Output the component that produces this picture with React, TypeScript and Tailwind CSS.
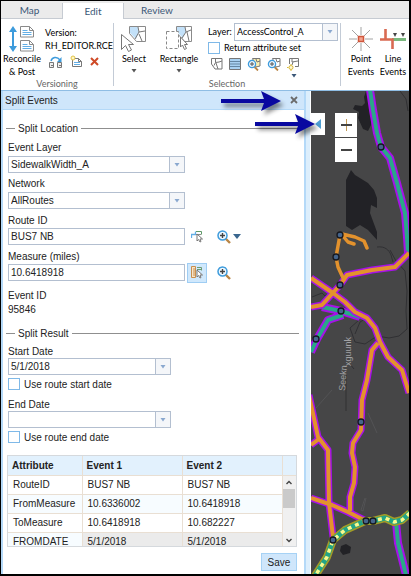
import type { ReactNode } from "react";

const ribbonFont = "font-[Lato,'Open_Sans',sans-serif]";
const panelFont = "font-['Liberation_Sans',Arial,sans-serif]";

function Caret({ className = "" }: { className?: string }) {
  return (
    <svg className={className} width="6" height="4" viewBox="0 0 6 4" aria-hidden="true">
      <path d="M.5 0h5L3 3.500z" fill="currentColor" />
    </svg>
  );
}

function Combo({ id, value, className = "" }: { id: string; value: string; className?: string }) {
  return (
    <div className={`relative flex ${className}`}>
      <select
        id={id}
        defaultValue={value}
        className="w-full appearance-none border border-[#b3bfd0] bg-white pl-[2px] pr-4 text-inherit outline-none"
      >
        <option>{value}</option>
      </select>
      <span className="pointer-events-none absolute inset-y-0 right-0 flex w-4 items-center justify-center border border-[#b3bfd0] bg-[#f4f6f9] text-[#8aa8cf]">
        <Caret />
      </span>
    </div>
  );
}

function CheckBox({ id }: { id: string }) {
  return (
    <input
      id={id}
      type="checkbox"
      className="size-3 shrink-0 appearance-none border border-[#7fb9e8] bg-white checked:bg-[#7fb9e8]"
    />
  );
}

/* ---------- ribbon icons ---------- */

function Page({ x, y }: { x: number; y: number }) {
  return (
    <g transform={`translate(${x} ${y})`}>
      <path d="M.5.5h9l4 4v6.500h-13z" fill="#fff" stroke="#8a8a8a" />
      <path d="M9.500.5v4h4" fill="none" stroke="#8a8a8a" />
      <path d="M2.500 4.500h5M2.500 6.500h9M2.500 8.500h9" stroke="#62aee6" />
    </g>
  );
}

function ReconcileIcon() {
  return (
    <svg width="26" height="26" viewBox="0 0 26 26" aria-hidden="true">
      <path d="M4 5v16" stroke="#3d9bdc" strokeWidth="2" />
      <path d="M4 0l4 6H0zM4 26l4-6H0z" fill="#3d9bdc" />
      <Page x={11} y={0} />
      <Page x={11} y={14} />
    </svg>
  );
}

function SelectIcon({ dashed = false }: { dashed?: boolean }) {
  return (
    <svg width="26" height="26" viewBox="0 0 26 26" aria-hidden="true">
      {dashed ? (
        <>
          <path d="M10.500.5h15v15h-7l-8-9z" fill="#fff" stroke="#8a8a8a" />
          <path d="M11 1h8l1 4-3 7-6-6z" fill="#c3e1f9" />
          <path d="M19 1l1 5 5-2M20 6l-4 6M21 6l2 9" fill="none" stroke="#777" />
          <path d="M.5 5.500h12v17H.5z" fill="#fff" stroke="#888" strokeDasharray="3 2" />
          <path d="M14.500 11v10l2-2 2 4.500 2-1-2-4h3z" fill="#fff" stroke="#777" />
        </>
      ) : (
        <>
          <path d="M8.500.5h16v15h-9l-7-8z" fill="#fff" stroke="#8a8a8a" />
          <path d="M9 1h8l1 5-3 7-6-6z" fill="#c3e1f9" />
          <path d="M17 1l1 5 6-1M18 6l-4 7M18 8l3 7" fill="none" stroke="#777" />
          <path d="M.5 8.500v15l4-4 3 6 3-1.500-3-5.500h5z" fill="#fff" stroke="#777" />
        </>
      )}
    </svg>
  );
}

function ReplicaIcon() {
  return (
    <svg width="14" height="12" viewBox="0 0 14 12" aria-hidden="true">
      <path d="M2 5c1-4 6-5 9-1" fill="none" stroke="#3d9bdc" strokeWidth="1.500" />
      <path d="M12.500 1v5H8z" fill="#3d9bdc" />
      <path d="M.5 6.500h4v5h-4zM8.500 6.500h4v5h-4z" fill="#eee" stroke="#777" />
      <path d="M2 9.500h2M10 9.500h2" stroke="#777" />
    </svg>
  );
}

function NewVersionIcon() {
  return (
    <svg width="13" height="13" viewBox="0 0 13 13" aria-hidden="true">
      <path d="M2.500 3.500h6l3 3v5h-9z" fill="#fff" stroke="#777" />
      <path d="M8.500 3.500v3h3" fill="none" stroke="#777" />
      <path d="M4 7.500h6M4 9.500h6" stroke="#62aee6" />
      <circle cx="3" cy="3" r="2" fill="#fff6c9" stroke="#e2c447" />
    </svg>
  );
}

function PolygonIcon() {
  return (
    <svg width="12" height="12" viewBox="0 0 12 12" aria-hidden="true">
      <path d="M.5.5h10.500v10.500H4L.5 6zM4.500.5v4L8 4l3-1M4.500 4.500l-1.500 3M5 5l2 6" fill="none" stroke="#777" />
    </svg>
  );
}

function RowsIcon() {
  return (
    <svg width="12" height="12" viewBox="0 0 12 12" aria-hidden="true">
      <path d="M.5.5h11v11H.5z" fill="#a9d2f2" stroke="#777" />
      <path d="M1 3.500h10M1 6h10M1 8.500h10" stroke="#6487a3" />
    </svg>
  );
}

function ZoomPolygonIcon({ yellow = false }: { yellow?: boolean }) {
  return (
    <svg width="14" height="13" viewBox="0 0 14 13" aria-hidden="true">
      <path d="M5.500.5h7.500V8L9 9z" fill={yellow ? "#fbeeb0" : "#fff"} stroke="#777" />
      <path d="M9 1l1 3 3-1" fill="none" stroke="#777" />
      <path d="M7.500 9l3.500 3.500" stroke="#b98545" strokeWidth="1.800" />
      <circle cx="5" cy="6" r="3.600" fill="#e9f5ff" stroke="#3d9bdc" strokeWidth="1.300" />
      <path d="M3 6h4M5 4v4" stroke="#555" />
    </svg>
  );
}

function FlashPolygonIcon() {
  return (
    <svg width="13" height="13" viewBox="0 0 13 13" aria-hidden="true">
      <path d="M2.500 6V.5h9v8H8" fill="none" stroke="#777" />
      <path d="M5 1v3l6-1M6 4L5 7" fill="none" stroke="#777" />
      <circle cx="4" cy="9.500" r="2" fill="#fff8d5" stroke="#d9b93a" />
      <path d="M4 6v1M4 12v1M0 9.500h1.500" stroke="#d9b93a" />
    </svg>
  );
}

function PointIcon() {
  return (
    <svg width="26" height="26" viewBox="0 0 26 26" aria-hidden="true">
      <path d="M13 1v8M13 17v8M1 13h8M17 13h8M4 4l6 6M16 16l6 6M22 4l-6 6M10 16l-6 6" stroke="#a3a3a3" />
      <path d="M10.500 10.500h5v5h-5z" fill="#f2a38f" stroke="#d0563b" strokeWidth="1.500" />
    </svg>
  );
}

function LineIcon() {
  return (
    <svg width="26" height="26" viewBox="0 0 26 26" aria-hidden="true">
      <path d="M12 13.500h14" stroke="#7ab87e" strokeWidth="3" />
      <path d="M5.500 3v10.500h7V23M0 13.500h13" fill="none" stroke="#d96a52" strokeWidth="2.600" />
      <path d="M13 7h4l-2 4zM21 7h4l-2 4z" fill="#444" />
    </svg>
  );
}

/* ---------- panel icons ---------- */

function MagnifierIcon() {
  return (
    <svg width="14" height="14" viewBox="0 0 14 14" aria-hidden="true">
      <path d="M8.500 8.500L13 13" stroke="#b98545" strokeWidth="2.400" />
      <circle cx="5.500" cy="5.500" r="4.500" fill="#eef8ff" stroke="#3d9bdc" strokeWidth="1.500" />
      <path d="M3 5.500h5M5.500 3v5" stroke="#444" strokeWidth="1.400" />
    </svg>
  );
}

function PickRouteIcon() {
  return (
    <svg width="12" height="13" viewBox="0 0 12 13" aria-hidden="true">
      <path d="M.5 8V4.500h4V1.500" fill="none" stroke="#62aee6" strokeWidth="1.300" />
      <path d="M5 1.500h5.500v3" fill="none" stroke="#5f9a68" />
      <path d="M5 4.500h5" stroke="#8a8a8a" />
      <path d="M6 4v7l1.500-1.500L9 12l1-.5L9 9h2.500z" fill="#fff" stroke="#777" />
    </svg>
  );
}

function PickMeasureIcon() {
  return (
    <svg width="12" height="13" viewBox="0 0 12 13" aria-hidden="true">
      <path d="M.5.5h4v11h-4z" fill="#f7e4c9" stroke="#c98f4e" />
      <path d="M2 3h2M2 5h2M2 7h2M2 9h2" stroke="#c98f4e" />
      <path d="M6 1.500h4.500v3M6 3.500h4" fill="none" stroke="#6c9a72" />
      <path d="M6 4v7l1.500-1.500L9 12l1-.5L9 9h2.500z" fill="#fff" stroke="#777" />
    </svg>
  );
}

/* ---------- ribbon ---------- */

function Group({ label, className = "", children }: { label: string; className?: string; children: ReactNode }) {
  return (
    <section aria-label={label || "Events"} className={`flex flex-col pt-[7px] ${className}`}>
      <div className="flex h-[52px] items-start">{children}</div>
      <div className="flex h-3 items-center justify-center text-[#666]">{label}</div>
    </section>
  );
}

function BigButton({ icon, lines, caret = false, className = "" }: { icon: ReactNode; lines: string[]; caret?: boolean; className?: string }) {
  return (
    <button type="button" className={`flex flex-col items-center leading-[13px] ${className}`}>
      {icon}
      {lines.map((line) => (
        <span key={line} className="whitespace-nowrap">{line}</span>
      ))}
      {caret && <Caret className="mt-1 text-[#555]" />}
    </button>
  );
}

function Ribbon() {
  return (
    <header className={`text-[9px] text-black ${ribbonFont}`}>
      <nav className="flex h-[18px] border-b border-[#c6cbd2] bg-[#ebebeb] pt-[2px] text-[10px] text-[#3b5878]">
        <button type="button" className="w-[61px] pr-1">Map</button>
        <button type="button" className="-mb-px w-[62px] border-x border-[#c6cbd2] bg-white">Edit</button>
        <button type="button" className="w-[66px]">Review</button>
      </nav>
      <div className="flex h-[71px] bg-white">
        <Group label="Versioning" className="w-[112px]">
          <BigButton icon={<ReconcileIcon />} lines={["Reconcile", "& Post"]} className="w-[43px]" />
          <div className="flex flex-1 flex-col pl-[2px] leading-[13px]">
            <span>Version:</span>
            <span>RH_EDITOR.RCE</span>
            <div className="mt-[3px] flex items-center gap-[7px] pl-1">
              <button type="button" aria-label="Create replica"><ReplicaIcon /></button>
              <button type="button" aria-label="New version"><NewVersionIcon /></button>
              <button type="button" aria-label="Delete version">
                <svg width="9" height="9" viewBox="0 0 9 9" aria-hidden="true">
                  <path d="M1 1l7 7M8 1L1 8" stroke="#cf4a27" strokeWidth="2" />
                </svg>
              </button>
            </div>
          </div>
        </Group>
        <div className="my-1 w-px bg-[#c3cbd6]" />
        <Group label="Selection" className="w-[227px]">
          <BigButton icon={<SelectIcon />} lines={["Select"]} caret className="w-10" />
          <BigButton icon={<SelectIcon dashed />} lines={["Rectangle"]} caret className="w-[50px]" />
          <div className="-mt-[3px] flex flex-1 flex-col pl-1">
            <div className="flex items-center gap-[2px]">
              <label htmlFor="layer" className="w-6">Layer:</label>
              <Combo id="layer" value="AccessControl_A" className="mr-[2px] h-[18px] flex-1" />
            </div>
            <div className="flex items-center gap-1">
              <CheckBox id="attr-set" />
              <label htmlFor="attr-set">Return attribute set</label>
            </div>
            <div className="mt-[3px] flex items-start gap-[6px] pl-[3px]">
              <button type="button" aria-label="Select by polygon"><PolygonIcon /></button>
              <button type="button" aria-label="Attribute table"><RowsIcon /></button>
              <button type="button" aria-label="Zoom to selection"><ZoomPolygonIcon yellow /></button>
              <button type="button" aria-label="Zoom to layer"><ZoomPolygonIcon /></button>
              <button type="button" aria-label="Selection options" className="flex flex-col items-center gap-[3px] text-[#3b5878]">
                <FlashPolygonIcon />
                <Caret />
              </button>
            </div>
          </div>
        </Group>
        <div className="my-1 w-px bg-[#c3cbd6]" />
        <Group label="" className="flex-1">
          <BigButton icon={<PointIcon />} lines={["Point", "Events"]} className="ml-1 w-8" />
          <BigButton icon={<LineIcon />} lines={["Line", "Events"]} className="w-8" />
        </Group>
      </div>
    </header>
  );
}

/* ---------- split events panel ---------- */

function Legend({ children }: { children: string }) {
  return (
    <h3 className="-mx-[2px] flex h-3 items-center gap-[3px]">
      <span className="h-px w-[9px] bg-[#8f8f8f]" />
      {children}
      <span className="h-px flex-1 bg-[#8f8f8f]" />
    </h3>
  );
}

const field = "h-[17px] w-[177px]";
const fieldLabel = "block h-3 leading-3";

const rows = [
  ["RouteID", "BUS7 NB", "BUS7 NB"],
  ["FromMeasure", "10.6336002", "10.6418918"],
  ["ToMeasure", "10.6418918", "10.682227"],
  ["FROMDATE", "5/1/2018", "5/1/2018"],
];

function ResultTable() {
  return (
    <div className="-ml-px h-[92px] overflow-hidden border border-[#d5d9dd]">
      <table className="w-full table-fixed border-collapse text-left">
        <colgroup>
          <col className="w-[74px]" />
          <col />
          <col />
          <col className="w-[14px]" />
        </colgroup>
        <thead>
          <tr className="h-[19px] bg-[#e2f1fd]">
            <th className="border-r border-b border-[#e9dfd3] pl-1">Attribute</th>
            <th className="border-r border-b border-[#e9dfd3] pl-1">Event 1</th>
            <th className="border-r border-b border-[#e9dfd3] pl-1">Event 2</th>
            <th className="border-b border-[#e9dfd3]" aria-label="Scroll" />
          </tr>
        </thead>
        <tbody>
          {rows.map(([name, first, second], i) => {
            const shade = i === 3 ? "bg-[#ebebeb]" : i === 1 ? "bg-[#f7fcff]" : "bg-white";
            return (
              <tr key={name} className="h-[19px]">
                <td className={`border-r border-b border-[#e9dfd3] pl-[5px] ${i % 2 ? "bg-[#f7fcff]" : "bg-white"}`}>{name}</td>
                <td className={`border-r border-b border-[#e9dfd3] pl-[5px] ${shade}`}>{first}</td>
                <td className={`border-r border-b border-[#e9dfd3] pl-[5px] ${shade}`}>{second}</td>
                {i === 0 && (
                  <td rowSpan={4} className="bg-[#f0f0f0] p-0 align-top">
                    <div className="flex h-[71px] flex-col items-center text-[#444]">
                      <svg className="my-1" width="6" height="5" viewBox="0 0 6 5" aria-hidden="true">
                        <path d="M.5 4L3 1.500 5.500 4" fill="none" stroke="currentColor" strokeWidth="1.400" />
                      </svg>
                      <span className="h-[19px] w-3 bg-[#cacaca]" />
                      <svg className="mt-auto mb-1" width="6" height="5" viewBox="0 0 6 5" aria-hidden="true">
                        <path d="M.5 1L3 3.500 5.500 1" fill="none" stroke="currentColor" strokeWidth="1.400" />
                      </svg>
                    </div>
                  </td>
                )}
              </tr>
            );
          })}
        </tbody>
      </table>
    </div>
  );
}

function SplitPanel() {
  return (
    <aside className={`flex w-[305px] shrink-0 flex-col border-x-2 border-[#b4d9f8] bg-white text-[10px] text-[#222] ${panelFont}`}>
      <div className="flex h-[19px] items-center justify-between border-b border-[#b4d9f8] bg-[#cfe6fb] pr-[6px] pl-[2px]">
        <h2>Split Events</h2>
        <button type="button" aria-label="Close">
          <svg width="8" height="8" viewBox="0 0 8 8" aria-hidden="true">
            <path d="M1 1l6 6M7 1L1 7" stroke="#6b6b6b" strokeWidth="1.800" />
          </svg>
        </button>
      </div>
      <div className="flex flex-col pt-3 pr-[7px] pb-[2px] pl-[5px]">
        <Legend>Split Location</Legend>
        <label htmlFor="event-layer" className={`mt-2 ${fieldLabel}`}>Event Layer</label>
        <Combo id="event-layer" value="SidewalkWidth_A" className={`mt-[2px] ${field}`} />
        <label htmlFor="network" className={`mt-[5px] ${fieldLabel}`}>Network</label>
        <Combo id="network" value="AllRoutes" className={`mt-[2px] ${field}`} />
        <label htmlFor="route-id" className={`mt-[6px] ${fieldLabel}`}>Route ID</label>
        <div className="mt-px flex h-[17px] items-center">
          <input id="route-id" defaultValue="BUS7 NB" className={`border border-[#b3bfd0] pl-[2px] outline-none ${field}`} />
          <button type="button" aria-label="Pick route" className="ml-[2px] flex h-5 w-5 items-center justify-center"><PickRouteIcon /></button>
          <button type="button" aria-label="Zoom to route" className="ml-[10px]"><MagnifierIcon /></button>
          <button type="button" aria-label="Zoom options" className="ml-[2px] text-[#3a678f]">
            <svg width="8" height="5" viewBox="0 0 8 5" aria-hidden="true"><path d="M0 0h8L4 5z" fill="currentColor" /></svg>
          </button>
        </div>
        <label htmlFor="measure" className={`mt-[6px] ${fieldLabel}`}>Measure (miles)</label>
        <div className="mt-px flex h-[17px] items-center">
          <input id="measure" defaultValue="10.6418918" className={`border border-[#b3bfd0] pl-[2px] outline-none ${field}`} />
          <button type="button" aria-label="Pick measure" className="ml-[2px] flex h-5 w-5 items-center justify-center border border-[#9fcdf3] bg-[#d0e8fc]"><PickMeasureIcon /></button>
          <button type="button" aria-label="Zoom to measure" className="ml-[10px]"><MagnifierIcon /></button>
        </div>
        <p className="mt-2 leading-[14px]">Event ID<br />95846</p>

        <div className="mt-[10px]"><Legend>Split Result</Legend></div>
        <label htmlFor="start-date" className={`mt-[7px] ${fieldLabel}`}>Start Date</label>
        <Combo id="start-date" value="5/1/2018" className="h-[17px] w-[163px]" />
        <div className="mt-[3px] flex h-3 items-center gap-1">
          <CheckBox id="use-start" />
          <label htmlFor="use-start">Use route start date</label>
        </div>
        <label htmlFor="end-date" className={`mt-[9px] ${fieldLabel}`}>End Date</label>
        <Combo id="end-date" value="" className="h-[17px] w-[163px]" />
        <div className="mt-[3px] flex h-3 items-center gap-1">
          <CheckBox id="use-end" />
          <label htmlFor="use-end">Use route end date</label>
        </div>
        <div className="mt-3"><ResultTable /></div>
        <button type="button" className="mt-[6px] h-[18px] w-9 self-end border border-[#a6d2f5] bg-[#cfe6fb]">Save</button>
      </div>
    </aside>
  );
}

/* ---------- map ---------- */

const orangeRoads = [
  "M409 253L395 267 372 270 347 275 340 285 322 305 311 307",
  "M311 278L333 293 345 302 355 312 367 318 375 328 380 342 388 357 402 370 409 393",
  "M378 343L372 350 367 380 362 400 361 430 353 443 352 453 355 467 354 483 350 497 350 511",
  "M309 395L318 437 328 450 329 503 333 537M319 439L311 445",
  "M311 498L332 505 348 512 366 521",
];
const tealRoads = [
  "M370 90L373 110 377 133 381 147 390 158 397 183 405 213 407 237 408 253",
  "M322 307L341 311 360 317M311 352L317 339 328 320 343 315",
  "M396 522L398 543 406 575",
];
const highway = "M410 513L402 520 394 522 385 518 373 521 365 521 345 530 333 540 327 557 315 576";
const nodes = [
  [381, 147], [340, 235], [336, 257], [340, 285], [341, 311], [316, 339], [361, 422], [366, 521], [373, 521], [333, 540],
];

function MapView() {
  return (
    <main className="relative flex-1 overflow-hidden bg-[#464647]">
      <svg className="absolute inset-0 h-full w-full" viewBox="311 91 98 483" preserveAspectRatio="xMidYMid slice" role="img" aria-label="Route map">
        <path d="M370 91l3 8-2 26-3 6-5-2-5-11 1-6-6-3 2-4 7 1 3-3-1-6 2-6z" fill="#222226" />
        <path d="M351 170l4 5 13 8 6 7 3 8v10l-6-3-1 8 7 19v8l-9-10-8-5-8 5-6-4V180z" fill="#222226" />
        <path d="M341 546l5-2 5 3-1 6-7 2-3-4z" fill="#222226" />
        <g fill="none" stroke="#303033" strokeWidth="1">
          <path d="M400 91l6 8 2 12M377 247c8-1 12 3 14 8l2 7M390 250l6 11 9 10 2 20-1 20 1 18-8 7-10 2-12-2-12 8-10-2-5-14 9-8M355 334l5-12 7-4" />
          <path d="M312 297l10-4 3 3 7-4M350 364l4 5M346 375v36" />
        </g>
        <g fill="none" stroke="#535355">
          <path d="M316 408l16-18M368 413l9 20M366 498l-3 13-2-1 4-12" />
        </g>
        <g fill="#a2a2a4" fontFamily="'Liberation Sans', sans-serif" fontSize="9">
          <text transform="translate(345 391) rotate(-86)">Seekn</text>
          <text transform="translate(351 366) rotate(-90)">xguunk</text>
        </g>
        <g fill="none" strokeLinejoin="round">
          {tealRoads.map((d) => <path key={d} d={d} stroke="#a612e8" strokeWidth="8" />)}
          {tealRoads.map((d) => <path key={`${d}-fill`} d={d} stroke="#29a887" strokeWidth="4" />)}
          {orangeRoads.map((d) => <path key={d} d={d} stroke="#a612e8" strokeWidth="7" />)}
          {orangeRoads.map((d) => <path key={`${d}-fill`} d={d} stroke="#e3922d" strokeWidth="4" />)}
          <path d="M340 235l-4 22 2 10 6 13M342 234l13 3 9 4 3 7M343 236l5 6 6 2" stroke="#e3922d" strokeWidth="3.500" strokeLinecap="round" />
          <path d={highway} stroke="#a39b26" strokeWidth="8" />
          <path d={highway} stroke="#22a486" strokeWidth="5" />
          <path d={highway} stroke="#fbf98c" strokeWidth="3.500" strokeDasharray="4 4" />
        </g>
        {nodes.map(([x, y]) => (
          <circle key={`${x}-${y}`} cx={x} cy={y} r="3" fill="#45658c" stroke="#15171f" strokeWidth="1.300" />
        ))}
      </svg>
      <button type="button" aria-label="Collapse panel" className="absolute top-[22px] left-0 flex h-[22px] w-[14px] items-center justify-center bg-white">
        <svg width="6" height="10" viewBox="0 0 6 10" aria-hidden="true"><path d="M6 0v10L0 5z" fill="#4f9fd2" /></svg>
      </button>
      <div className="absolute top-[22px] left-6 flex w-[22px] flex-col gap-px">
        <button type="button" aria-label="Zoom in" className="flex h-6 items-center justify-center bg-white">
          <svg width="11" height="12" viewBox="0 0 11 12" aria-hidden="true"><path d="M5.500 0v12" stroke="#c39a55" /><path d="M0 6h11" stroke="#444" strokeWidth="2" /></svg>
        </button>
        <button type="button" aria-label="Zoom out" className="flex h-6 items-center justify-center bg-white">
          <svg width="11" height="12" viewBox="0 0 11 12" aria-hidden="true"><path d="M0 6h11" stroke="#444" strokeWidth="2" /></svg>
        </button>
      </div>
    </main>
  );
}

function Arrow({ className }: { className: string }) {
  return (
    <svg className={`pointer-events-none absolute drop-shadow-[3px_4px_2px_#00000073] ${className}`} width="60" height="20" viewBox="0 0 60 20" aria-hidden="true">
      <path d="M0 8h43L40 0l20 10-20 10 3-8H0z" fill="#0808a0" />
    </svg>
  );
}

export default function App() {
  return (
    <div className="flex min-h-screen flex-col border-t border-r-2 border-b-2 border-l border-black bg-white">
      <Ribbon />
      <div className="relative flex flex-1 border-t border-[#8fbde4]">
        <SplitPanel />
        <div className="w-[5px] shrink-0 border-r border-white bg-[#dceefc]" />
        <MapView />
        <Arrow className="top-0 left-[220px]" />
        <Arrow className="top-[23px] left-[254px]" />
      </div>
    </div>
  );
}
